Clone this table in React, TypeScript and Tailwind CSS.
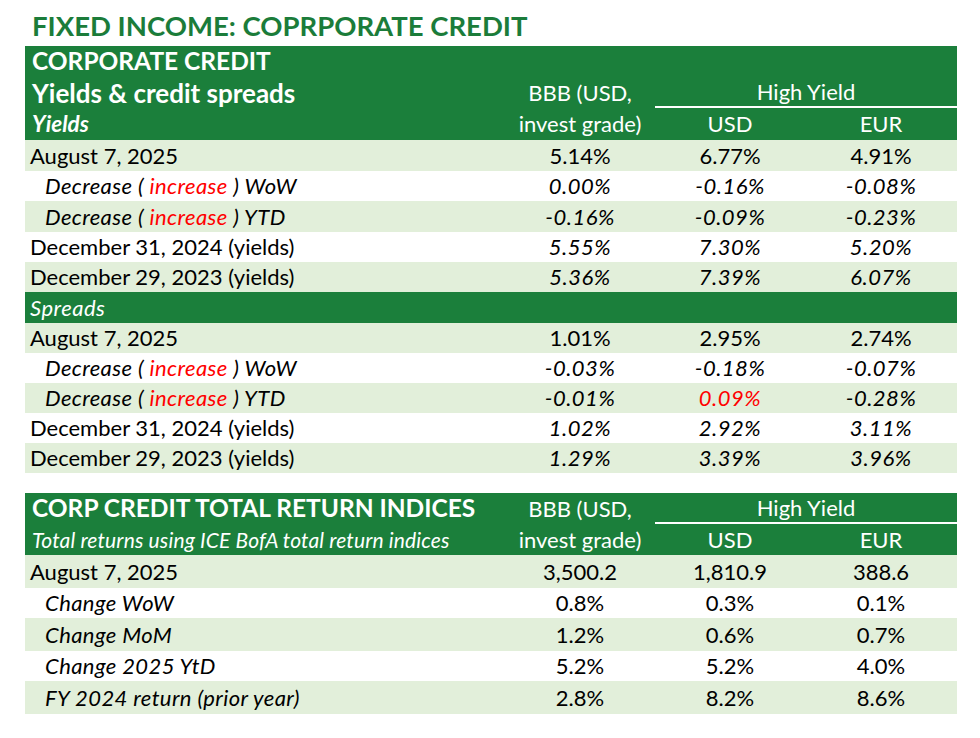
import React from "react";

type Row = {
  label: React.ReactNode;
  indent?: boolean;
  italicLabel?: boolean;
  values: string[];
  italicValues?: boolean;
  redIndex?: number;
  shaded: boolean;
  h?: string;
};

const inc = (suffix: string) => (
  <>
    Decrease ( <span className="text-[#ff0000]">increase</span> ) {suffix}
  </>
);

const yieldRows: Row[] = [
  { label: "August 7, 2025", values: ["5.14%", "6.77%", "4.91%"], shaded: true, h: "h-[31px]" },
  { label: inc("WoW"), indent: true, italicLabel: true, values: ["0.00%", "-0.16%", "-0.08%"], italicValues: true, shaded: false },
  { label: inc("YTD"), indent: true, italicLabel: true, values: ["-0.16%", "-0.09%", "-0.23%"], italicValues: true, shaded: true, h: "h-[31px]" },
  { label: "December 31, 2024 (yields)", values: ["5.55%", "7.30%", "5.20%"], italicValues: true, shaded: false },
  { label: "December 29, 2023 (yields)", values: ["5.36%", "7.39%", "6.07%"], italicValues: true, shaded: true },
];

const spreadRows: Row[] = [
  { label: "August 7, 2025", values: ["1.01%", "2.95%", "2.74%"], shaded: true },
  { label: inc("WoW"), indent: true, italicLabel: true, values: ["-0.03%", "-0.18%", "-0.07%"], italicValues: true, shaded: false },
  { label: inc("YTD"), indent: true, italicLabel: true, values: ["-0.01%", "0.09%", "-0.28%"], italicValues: true, redIndex: 1, shaded: true },
  { label: "December 31, 2024 (yields)", values: ["1.02%", "2.92%", "3.11%"], italicValues: true, shaded: false },
  { label: "December 29, 2023 (yields)", values: ["1.29%", "3.39%", "3.96%"], italicValues: true, shaded: true },
];

const returnRows: Row[] = [
  { label: "August 7, 2025", values: ["3,500.2", "1,810.9", "388.6"], shaded: true, h: "h-[33px]" },
  { label: "Change WoW", indent: true, italicLabel: true, values: ["0.8%", "0.3%", "0.1%"], shaded: false, h: "h-[30px]" },
  { label: "Change MoM", indent: true, italicLabel: true, values: ["1.2%", "0.6%", "0.7%"], shaded: true, h: "h-[33px]" },
  { label: "Change 2025 YtD", indent: true, italicLabel: true, values: ["5.2%", "5.2%", "4.0%"], shaded: false, h: "h-[30px]" },
  { label: "FY 2024 return (prior year)", indent: true, italicLabel: true, values: ["2.8%", "8.2%", "8.6%"], shaded: true, h: "h-[33px]" },
];

const cols = "grid grid-cols-[480px_150px_150px_152px]";

function DataRow({ row }: { row: Row }) {
  return (
    <div
      className={`${cols} ${row.h ?? "h-[30px]"} items-center ${row.shaded ? "bg-[#e2efda]" : "bg-white"}`}
    >
      <div
        className={`${row.indent ? "pl-5" : "pl-[5px]"} ${row.italicLabel ? "italic tracking-[0.4px]" : ""} whitespace-nowrap`}
      >
        {row.label}
      </div>
      {row.values.map((v, i) => (
        <div
          key={i}
          className={`text-center ${row.italicValues ? "italic tracking-[0.5px]" : ""} ${row.redIndex === i ? "text-[#ff0000]" : ""}`}
        >
          {v}
        </div>
      ))}
    </div>
  );
}

function ColumnHeads() {
  return (
    <>
      <div className="text-center">BBB (USD,</div>
      <div className="col-span-2 text-center border-b-2 border-white leading-[29px]">High Yield</div>
    </>
  );
}

export default function App() {
  return (
    <div
      className="w-[980px] h-[738px] bg-white text-black text-[22px] leading-none"
      style={{ fontFamily: "Lato, 'Liberation Sans', sans-serif" }}
    >
      <h1 className="pl-8 pt-[9px] h-[46px] text-[27.5px] font-bold text-[#1b7c3a] leading-[34px]">
        FIXED INCOME: COPRPORATE CREDIT
      </h1>

      <div className="ml-[25px] w-[932px]">
        {/* Yields & spreads header */}
        <div className={`${cols} grid-rows-[31px_31px_32px] bg-[#1b7f3b] text-white items-center`}>
          <div className="pl-[7px] font-bold text-[24.5px]">CORPORATE CREDIT</div>
          <div />
          <div className="col-span-2" />
          <div className="pl-[7px] font-bold text-[26px]">Yields &amp; credit spreads</div>
          <ColumnHeads />
          <div className="pl-[7px] font-bold italic text-[22.5px]">Yields</div>
          <div className="text-center">invest grade)</div>
          <div className="text-center">USD</div>
          <div className="text-center">EUR</div>
        </div>

        {yieldRows.map((r, i) => (
          <DataRow key={i} row={r} />
        ))}

        <div className="h-[31px] bg-[#1b7f3b] text-white italic tracking-[0.5px] flex items-center pl-[5px]">
          Spreads
        </div>

        {spreadRows.map((r, i) => (
          <DataRow key={i} row={r} />
        ))}

        <div className="h-[20px]" />

        {/* Total return header */}
        <div className={`${cols} grid-rows-[31px_31px] bg-[#1b7f3b] text-white items-center`}>
          <div className="pl-[7px] font-bold text-[24.5px] whitespace-nowrap">CORP CREDIT TOTAL RETURN INDICES</div>
          <ColumnHeads />
          <div className="pl-[7px] italic text-[21px] tracking-[0.15px] whitespace-nowrap">
            Total returns using ICE BofA total return indices
          </div>
          <div className="text-center">invest grade)</div>
          <div className="text-center">USD</div>
          <div className="text-center">EUR</div>
        </div>

        {returnRows.map((r, i) => (
          <DataRow key={i} row={r} />
        ))}
      </div>
    </div>
  );
}
